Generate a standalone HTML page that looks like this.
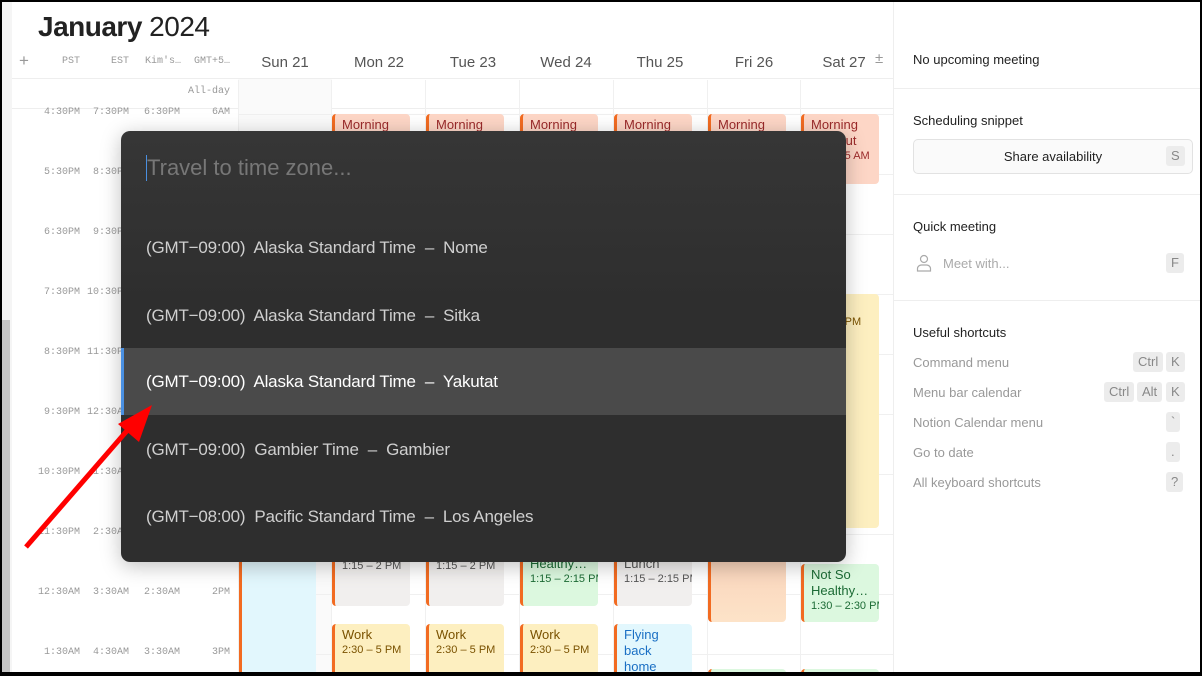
<!DOCTYPE html>
<html><head><meta charset="utf-8"><style>
*{margin:0;padding:0;box-sizing:border-box}
body{width:1202px;height:676px;overflow:hidden;background:#000;font-family:"Liberation Sans",sans-serif;position:relative}
#app{position:absolute;left:2px;top:2px;width:1198px;height:670px;background:#fff;overflow:hidden}
.a{position:absolute}
.m{font-family:"Liberation Mono",monospace;font-size:10px;color:#999;text-align:right}
.tl{line-height:60px;top:81px;white-space:nowrap}
.dh{position:absolute;top:52px;font-size:15px;color:#555;text-align:center;width:94px}
.ev{position:absolute;border-left:3px solid #f26b21;border-radius:4px;padding:3px 0 0 7px;font-size:13px;line-height:16px;overflow:hidden;white-space:nowrap}
.ev small{display:block;font-size:11px;line-height:15px}
.pe{background:#fdd6c6;color:#9b2a2a}
.ye{background:#fdefc0;color:#7a5200}
.gr{background:#f1efee;color:#555}
.gn{background:#dcf8df;color:#1c6b35}
.bl{background:#e2f7fd;color:#1a6fc4}
.vl{position:absolute;top:78px;bottom:0;width:1px;background:#f0f0f0}
.hl{position:absolute;left:236px;width:655px;height:1px;background:#f0f0f0}
.k{position:absolute;background:#ececec;color:#888;font-size:13px;height:20px;line-height:20px;text-align:center;border-radius:3px;padding:0 5px}
.sc{position:absolute;left:911px;font-size:13px;color:#999}
.opt{position:absolute;left:119px;width:725px;height:67px;line-height:67px;padding-left:25px;font-size:17px;color:#cfcfcf;letter-spacing:-0.2px}
</style></head><body><div id="app">
<div class="a" style="left:0;top:0;width:10px;height:670px;background:#f5f5f5"></div>
<div class="a" style="left:0;top:318px;width:8px;height:352px;background:#c4c4c4"></div>
<div class="a" style="left:36px;top:9px;font-size:28px;color:#222;letter-spacing:-0.5px"><b>January</b> 2024</div>
<div class="a" style="left:17px;top:49px;font-size:17px;color:#999">+</div>
<div class="a m" style="left:40px;top:54px;width:38px">PST</div>
<div class="a m" style="left:90px;top:54px;width:37px">EST</div>
<div class="a m" style="left:132px;top:54px;width:47px">Kim's…</div>
<div class="a m" style="left:182px;top:54px;width:46px">GMT+5…</div>
<div class="dh" style="left:236px">Sun 21</div><div class="dh" style="left:330px">Mon 22</div><div class="dh" style="left:424px">Tue 23</div><div class="dh" style="left:517px">Wed 24</div><div class="dh" style="left:611px">Thu 25</div><div class="dh" style="left:705px">Fri 26</div><div class="dh" style="left:795px">Sat 27</div>
<div class="a" style="left:873px;top:48px;font-size:15px;color:#999">±</div>
<div class="a" style="left:10px;top:76px;width:881px;height:1px;background:#eee"></div>
<div class="a" style="left:10px;top:106px;width:881px;height:1px;background:#eee"></div>
<div class="a m" style="left:160px;top:84px;width:68px">All-day</div>
<div class="a" style="left:236px;top:77px;width:94px;height:593px;background:#fafafa"></div>
<div class="vl" style="left:236px"></div><div class="vl" style="left:329px"></div><div class="vl" style="left:423px"></div><div class="vl" style="left:517px"></div><div class="vl" style="left:611px"></div><div class="vl" style="left:705px"></div><div class="vl" style="left:798px"></div>
<div class="a" style="left:891px;top:0;width:1px;height:670px;background:#eee"></div>
<div class="hl" style="top:112px"></div><div class="hl" style="top:172px"></div><div class="hl" style="top:232px"></div><div class="hl" style="top:292px"></div><div class="hl" style="top:352px"></div><div class="hl" style="top:412px"></div><div class="hl" style="top:472px"></div><div class="hl" style="top:532px"></div><div class="hl" style="top:592px"></div><div class="hl" style="top:652px"></div>
<div class="a m tl" style="left:20px;width:58px">4:30PM<br>5:30PM<br>6:30PM<br>7:30PM<br>8:30PM<br>9:30PM<br>10:30PM<br>11:30PM<br>12:30AM<br>1:30AM</div>
<div class="a m tl" style="left:70px;width:57px">7:30PM<br>8:30PM<br>9:30PM<br>10:30PM<br>11:30PM<br>12:30AM<br>1:30AM<br>2:30AM<br>3:30AM<br>4:30AM</div>
<div class="a m tl" style="left:120px;width:58px">6:30PM<br>7:30PM<br>8:30PM<br>9:30PM<br>10:30PM<br>11:30PM<br>12:30AM<br>1:30AM<br>2:30AM<br>3:30AM</div>
<div class="a m tl" style="left:180px;width:48px">6AM<br>7AM<br>8AM<br>9AM<br>10AM<br>11AM<br>12PM<br>1PM<br>2PM<br>3PM</div>
<!-- events -->
<div class="ev pe" style="left:330px;top:112px;width:78px;height:60px">Morning</div>
<div class="ev pe" style="left:424px;top:112px;width:78px;height:60px">Morning</div>
<div class="ev pe" style="left:518px;top:112px;width:78px;height:60px">Morning</div>
<div class="ev pe" style="left:612px;top:112px;width:78px;height:60px">Morning</div>
<div class="ev pe" style="left:706px;top:112px;width:78px;height:60px">Morning</div>
<div class="ev pe" style="left:799px;top:112px;width:78px;height:70px;white-space:normal">Morning workout<small>6 – 6:45 AM</small></div>
<div class="ev ye" style="left:799px;top:292px;width:78px;height:234px"><small style="margin-top:18px">12 – 1 PM</small></div>
<div class="ev bl" style="left:237px;top:540px;width:77px;height:140px"></div>
<div class="ev gr" style="left:330px;top:538px;width:78px;height:66px">Healthy…<small>1:15 – 2 PM</small></div>
<div class="ev gr" style="left:424px;top:538px;width:78px;height:66px">Healthy…<small>1:15 – 2 PM</small></div>
<div class="ev gn" style="left:518px;top:538px;width:78px;height:66px;padding-top:0">Not So<br>Healthy…<small>1:15 – 2:15 PM</small></div>
<div class="ev gr" style="left:612px;top:538px;width:78px;height:66px;padding-top:0">Healthy<br>Lunch<small>1:15 – 2:15 PM</small></div>
<div class="ev pe" style="left:706px;top:540px;width:78px;height:80px;background:linear-gradient(#f8d0b8,#fde3c8)"></div>
<div class="ev gn" style="left:799px;top:562px;width:78px;height:58px">Not So<br>Healthy…<small>1:30 – 2:30 PM</small></div>
<div class="ev ye" style="left:330px;top:622px;width:78px;height:60px">Work<small>2:30 – 5 PM</small></div>
<div class="ev ye" style="left:424px;top:622px;width:78px;height:60px">Work<small>2:30 – 5 PM</small></div>
<div class="ev ye" style="left:518px;top:622px;width:78px;height:60px">Work<small>2:30 – 5 PM</small></div>
<div class="ev bl" style="left:612px;top:622px;width:78px;height:60px">Flying<br>back<br>home</div>
<div class="ev gn" style="left:706px;top:667px;width:78px;height:20px"></div>
<div class="ev gn" style="left:799px;top:667px;width:78px;height:20px"></div>
<!-- sidebar -->
<div class="a" style="left:911px;top:50px;font-size:13px;color:#222">No upcoming meeting</div>
<div class="a" style="left:892px;top:86px;width:306px;height:1px;background:#eee"></div>
<div class="a" style="left:911px;top:111px;font-size:13px;color:#222">Scheduling snippet</div>
<div class="a" style="left:911px;top:137px;width:280px;height:35px;border:1px solid #e2e2e2;border-radius:5px;background:#fafafa;font-size:13px;color:#222;text-align:center;line-height:33px">Share availability</div>
<div class="k" style="left:1164px;top:144px">S</div>
<div class="a" style="left:892px;top:192px;width:306px;height:1px;background:#eee"></div>
<div class="a" style="left:911px;top:217px;font-size:13px;color:#222">Quick meeting</div>
<svg class="a" style="left:914px;top:252px" width="16" height="18" viewBox="0 0 16 18" fill="none" stroke="#aaa" stroke-width="1.2"><circle cx="8" cy="5" r="3.5"/><path d="M1.5 17v-2.5c0-2 2-3.5 4-3.5h5c2 0 4 1.5 4 3.5V17z"/></svg>
<div class="a" style="left:941px;top:254px;font-size:13px;color:#aaa">Meet with...</div>
<div class="k" style="left:1164px;top:251px">F</div>
<div class="a" style="left:892px;top:298px;width:306px;height:1px;background:#eee"></div>
<div class="a" style="left:911px;top:323px;font-size:13px;color:#222">Useful shortcuts</div>
<div class="sc" style="top:353px">Command menu</div><div class="k" style="left:1131px;top:350px">Ctrl</div><div class="k" style="left:1164px;top:350px">K</div>
<div class="sc" style="top:383px">Menu bar calendar</div><div class="k" style="left:1102px;top:380px">Ctrl</div><div class="k" style="left:1135px;top:380px">Alt</div><div class="k" style="left:1164px;top:380px">K</div>
<div class="sc" style="top:413px">Notion Calendar menu</div><div class="k" style="left:1164px;top:410px">`</div>
<div class="sc" style="top:443px">Go to date</div><div class="k" style="left:1164px;top:440px">.</div>
<div class="sc" style="top:473px">All keyboard shortcuts</div><div class="k" style="left:1164px;top:470px">?</div>
<!-- modal -->
<div class="a" style="left:119px;top:129px;width:725px;height:431px;background:linear-gradient(#363636,#2e2e2e 40%);border-radius:9px;box-shadow:0 4px 20px rgba(0,0,0,.25);overflow:hidden">
<div class="a" style="left:25px;top:24px;width:1px;height:26px;background:#4a8fe0"></div>
<div class="a" style="left:26px;top:24px;font-size:22px;color:#777">Travel to time zone...</div>
<div class="a" style="left:0;top:217px;width:725px;height:67px;background:#4a4a4a"></div>
<div class="a" style="left:0;top:217px;width:3px;height:67px;background:#4a90e2"></div>
</div>
<div class="opt" style="top:212px">(GMT−09:00)&nbsp; Alaska Standard Time &nbsp;–&nbsp; Nome</div>
<div class="opt" style="top:280px">(GMT−09:00)&nbsp; Alaska Standard Time &nbsp;–&nbsp; Sitka</div>
<div class="opt" style="top:346px;color:#fff">(GMT−09:00)&nbsp; Alaska Standard Time &nbsp;–&nbsp; Yakutat</div>
<div class="opt" style="top:414px">(GMT−09:00)&nbsp; Gambier Time &nbsp;–&nbsp; Gambier</div>
<div class="opt" style="top:481px">(GMT−08:00)&nbsp; Pacific Standard Time &nbsp;–&nbsp; Los Angeles</div>
</div>
<svg class="a" style="left:0;top:0" width="1202" height="676"><line x1="26" y1="547" x2="132" y2="425" stroke="#f00" stroke-width="5"/><polygon points="152,405 118,424 139,442" fill="#f00"/></svg>
</body></html>
